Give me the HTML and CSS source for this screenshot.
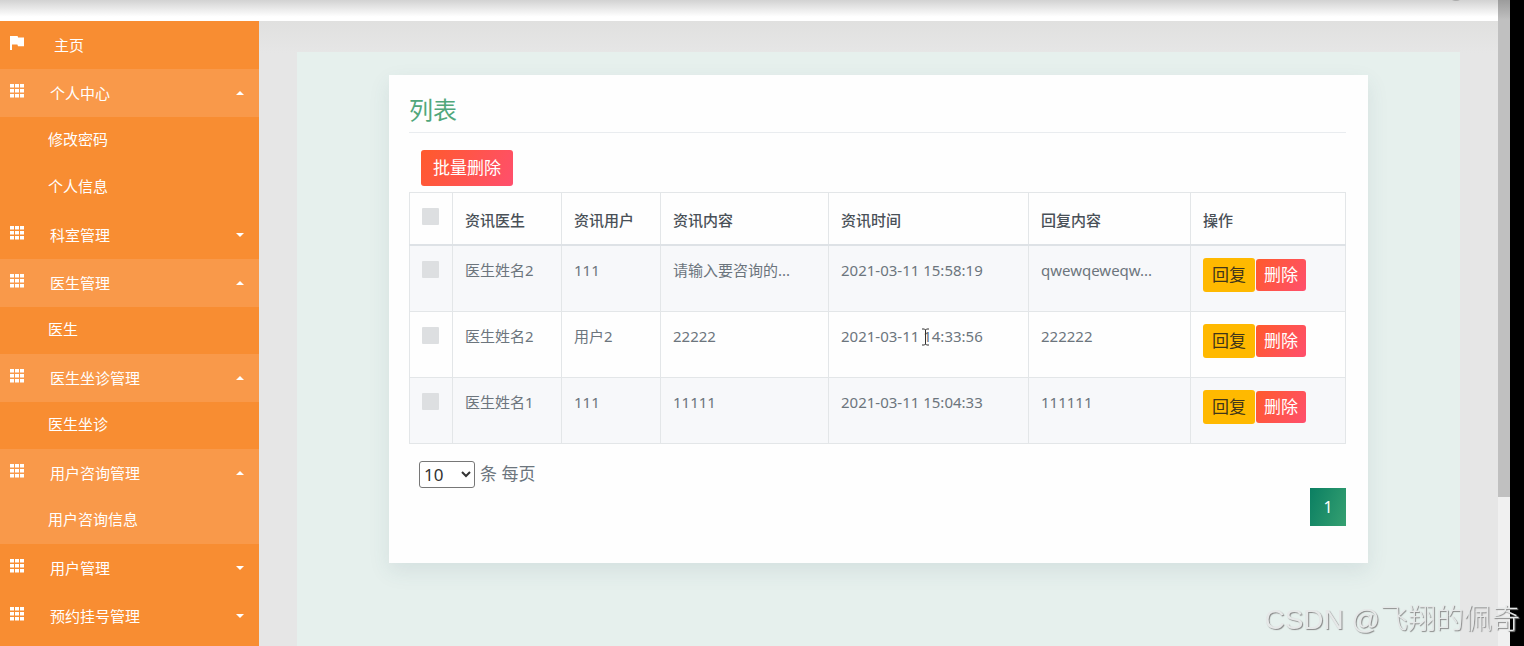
FILE: index.html
```html
<!DOCTYPE html>
<html lang="zh-CN">
<head>
<meta charset="utf-8">
<title>列表</title>
<link rel="stylesheet" href="styles.css">
</head>
<body>
<svg class="defs" aria-hidden="true">
  <symbol id="grid" viewBox="0 0 14 14"><path d="M0 0h4v3.6H0zM5 0h4v3.6H5zM10 0h4v3.6h-4zM0 5h4v3.6H0zM5 5h4v3.6H5zM10 5h4v3.6h-4zM0 10h4v3.6H0zM5 10h4v3.6H5zM10 10h4v3.6h-4z"/></symbol>
  <symbol id="flag" viewBox="0 0 14 14"><path d="M0 0h7.6l.5 1.6H14v8.6H8L7.4 8.6H2V14H0z"/></symbol>
</svg>
<div class="screen">
  <div class="page">
    <header class="topbar"><span class="avatar"></span></header>
    <div class="body">
      <nav class="sidebar">
        <a class="item" href="#"><svg class="icon"><use href="#flag"/></svg><span class="home">主页</span></a>
        <a class="item open" href="#"><svg class="icon"><use href="#grid"/></svg><span>个人中心</span><i class="caret up"></i></a>
        <a class="sub" href="#">修改密码</a>
        <a class="sub" href="#">个人信息</a>
        <a class="item" href="#"><svg class="icon"><use href="#grid"/></svg><span>科室管理</span><i class="caret"></i></a>
        <a class="item open" href="#"><svg class="icon"><use href="#grid"/></svg><span>医生管理</span><i class="caret up"></i></a>
        <a class="sub" href="#">医生</a>
        <a class="item open" href="#"><svg class="icon"><use href="#grid"/></svg><span>医生坐诊管理</span><i class="caret up"></i></a>
        <a class="sub" href="#">医生坐诊</a>
        <a class="item open" href="#"><svg class="icon"><use href="#grid"/></svg><span>用户咨询管理</span><i class="caret up"></i></a>
        <a class="sub open" href="#">用户咨询信息</a>
        <a class="item" href="#"><svg class="icon"><use href="#grid"/></svg><span>用户管理</span><i class="caret"></i></a>
        <a class="item" href="#"><svg class="icon"><use href="#grid"/></svg><span>预约挂号管理</span><i class="caret"></i></a>
      </nav>
      <main class="content">
        <div class="panel">
          <section class="card">
            <h1 class="title">列表</h1>
            <button class="btn danger batch" type="button">批量删除</button>
            <table class="list">
              <colgroup><col class="c-check"><col class="c-doctor"><col class="c-user"><col class="c-text"><col class="c-time"><col class="c-reply"><col></colgroup>
              <thead>
                <tr><th><input type="checkbox" aria-label="全选"></th><th>资讯医生</th><th>资讯用户</th><th>资讯内容</th><th>资讯时间</th><th>回复内容</th><th>操作</th></tr>
              </thead>
              <tbody>
                <tr><td><input type="checkbox" aria-label="选择"></td><td>医生姓名2</td><td>111</td><td>请输入要咨询的...</td><td>2021-03-11 15:58:19</td><td>qwewqeweqw...</td><td><div class="actions"><button class="btn warning" type="button">回复</button><button class="btn danger" type="button">删除</button></div></td></tr>
                <tr><td><input type="checkbox" aria-label="选择"></td><td>医生姓名2</td><td>用户2</td><td>22222</td><td class="hovered">2021-03-11 14:33:56<svg class="cursor" viewBox="0 0 9 18"><path d="M1 1h2.5l1 1 1-1H8M4.5 2v14M1 17h2.5l1-1 1 1H8"/></svg></td><td>222222</td><td><div class="actions"><button class="btn warning" type="button">回复</button><button class="btn danger" type="button">删除</button></div></td></tr>
                <tr><td><input type="checkbox" aria-label="选择"></td><td>医生姓名1</td><td>111</td><td>11111</td><td>2021-03-11 15:04:33</td><td>111111</td><td><div class="actions"><button class="btn warning" type="button">回复</button><button class="btn danger" type="button">删除</button></div></td></tr>
              </tbody>
            </table>
            <label class="size"><select><option>10</option></select><span>条 每页</span></label>
            <div class="pager"><button class="current" type="button">1</button></div>
          </section>
        </div>
      </main>
    </div>
  </div>
  <div class="scrollbar"><div class="thumb"></div></div>
  <div class="edge"></div>
</div>
<div class="watermark">CSDN @飞翔的佩奇</div>
</body>
</html>
```
FILE: styles.css
```css
* { box-sizing: border-box; }
body {
  margin: 0;
  overflow: hidden;
  color: #6c757d;
  font: 15px/24px "Noto Sans", "Noto Sans CJK SC", sans-serif;
}
button, select { font-family: inherit; }
.defs { display: none; }

.screen { display: flex; height: 100vh; background: #e6e6e6; }
.page { flex: 1; min-width: 0; display: flex; flex-direction: column; }
.topbar {
  flex: 0 0 21px;
  position: relative;
  overflow: hidden;
  background: linear-gradient(#d2d2d2, #f4f4f4 60%, #fff 80%);
}
.avatar {
  position: absolute;
  right: 34px;
  top: -15px;
  width: 16px;
  height: 16px;
  border-radius: 50%;
  background: #aaa;
}
.body { flex: 1; min-height: 0; display: flex; overflow: hidden; }

.sidebar { flex: 0 0 259px; background: #f88d32; overflow: hidden; }
.item, .sub { display: flex; align-items: center; color: #fff; text-decoration: none; }
.item { height: 48px; padding: 0 15px 1px 10px; }
.sub { height: 47px; padding: 0 0 4px 48px; }
.open { background: #f9994a; }
.icon { width: 14px; height: 14px; margin: 0 26px 3px 0; fill: #fff; }
.home { margin-left: 4px; }
.caret {
  margin-left: auto;
  border: 4px solid transparent;
  border-top-color: #fff;
  border-bottom: 0;
}
.caret.up { border-top: 0; border-bottom: 4px solid #fff; }

.content {
  flex: 1;
  min-width: 0;
  padding: 31px 38px 0;
  background: linear-gradient(#e0e0df, #e6e6e6 32px);
}
.panel { height: 100%; padding: 23px 92px 0; background: #e6f0ed; }
.card {
  padding: 20px 22px 37px 20px;
  background: #fefefe;
  box-shadow: 0 8px 20px rgba(60, 90, 110, .1);
}
.title {
  margin: 0 0 17px;
  padding-bottom: 7px;
  border-bottom: 1px solid #e9ecef;
  color: #51a77b;
  font-size: 24px;
  line-height: 30px;
  font-weight: 400;
}
.btn { display: block; border: 0; border-radius: 3px; font-size: 17px; line-height: 24px; }
.danger { padding: 4px 8px; color: #fff; background: linear-gradient(120deg, #ff5a2b, #ff4f6d); }
.warning { padding: 5px 9px; color: #40351a; background: #ffb900; }
.batch { margin: 0 0 6px 12px; padding: 6px 12px; }

.list { width: 100%; table-layout: fixed; border-collapse: collapse; }
.list th, .list td {
  padding: 12px;
  border: 1px solid #e3e6e8;
  text-align: left;
  vertical-align: top;
  white-space: nowrap;
}
.list th { padding-top: 15px; border-bottom: 2px solid #dee2e6; color: #495057; font-weight: 500; }
.list td { height: 66px; }
.list tbody tr:nth-child(odd) { background: #f7f8fa; }
.list input {
  display: block;
  width: 17px;
  height: 17px;
  margin: 3px 0 0;
  appearance: none;
  border-radius: 1px;
  background: #dddfe1;
}
.list th input { margin: 0; }
.c-check { width: 43px; }
.c-doctor { width: 109px; }
.c-user { width: 99px; }
.c-text { width: 168px; }
.c-time { width: 200px; }
.c-reply { width: 162px; }
.actions { display: flex; align-items: center; gap: 1px; }
.hovered { position: relative; }
.cursor {
  position: absolute;
  left: 92px;
  top: 16px;
  width: 9px;
  height: 18px;
  fill: none;
  stroke: #333;
}

.size { display: inline-flex; align-items: center; gap: 5px; margin: 17px 0 0 10px; font-size: 17px; }
.size select {
  width: 56px;
  height: 27px;
  padding: 0;
  border: 1px solid #777;
  border-radius: 3px;
  background: #fff;
  color: #333;
  font-size: 17px;
}
.pager { display: flex; justify-content: flex-end; }
.current {
  width: 36px;
  height: 38px;
  padding: 0;
  border: 0;
  color: #fff;
  font-size: 16px;
  background: linear-gradient(110deg, #0b7f62, #35a071);
}

.scrollbar { flex: 0 0 12px; background: #f0f0f0; }
.thumb { height: 77%; background: linear-gradient(#9c9c9c, #c0c0c0 20px); }
.edge { flex: 0 0 14px; background: #000; }
.watermark {
  position: fixed;
  right: 4px;
  bottom: 6px;
  color: #e6e8e8;
  font: 300 28px/40px "Liberation Sans", "Noto Sans CJK SC", sans-serif;
  text-shadow: 1px 1px 1px #888;
}
```
